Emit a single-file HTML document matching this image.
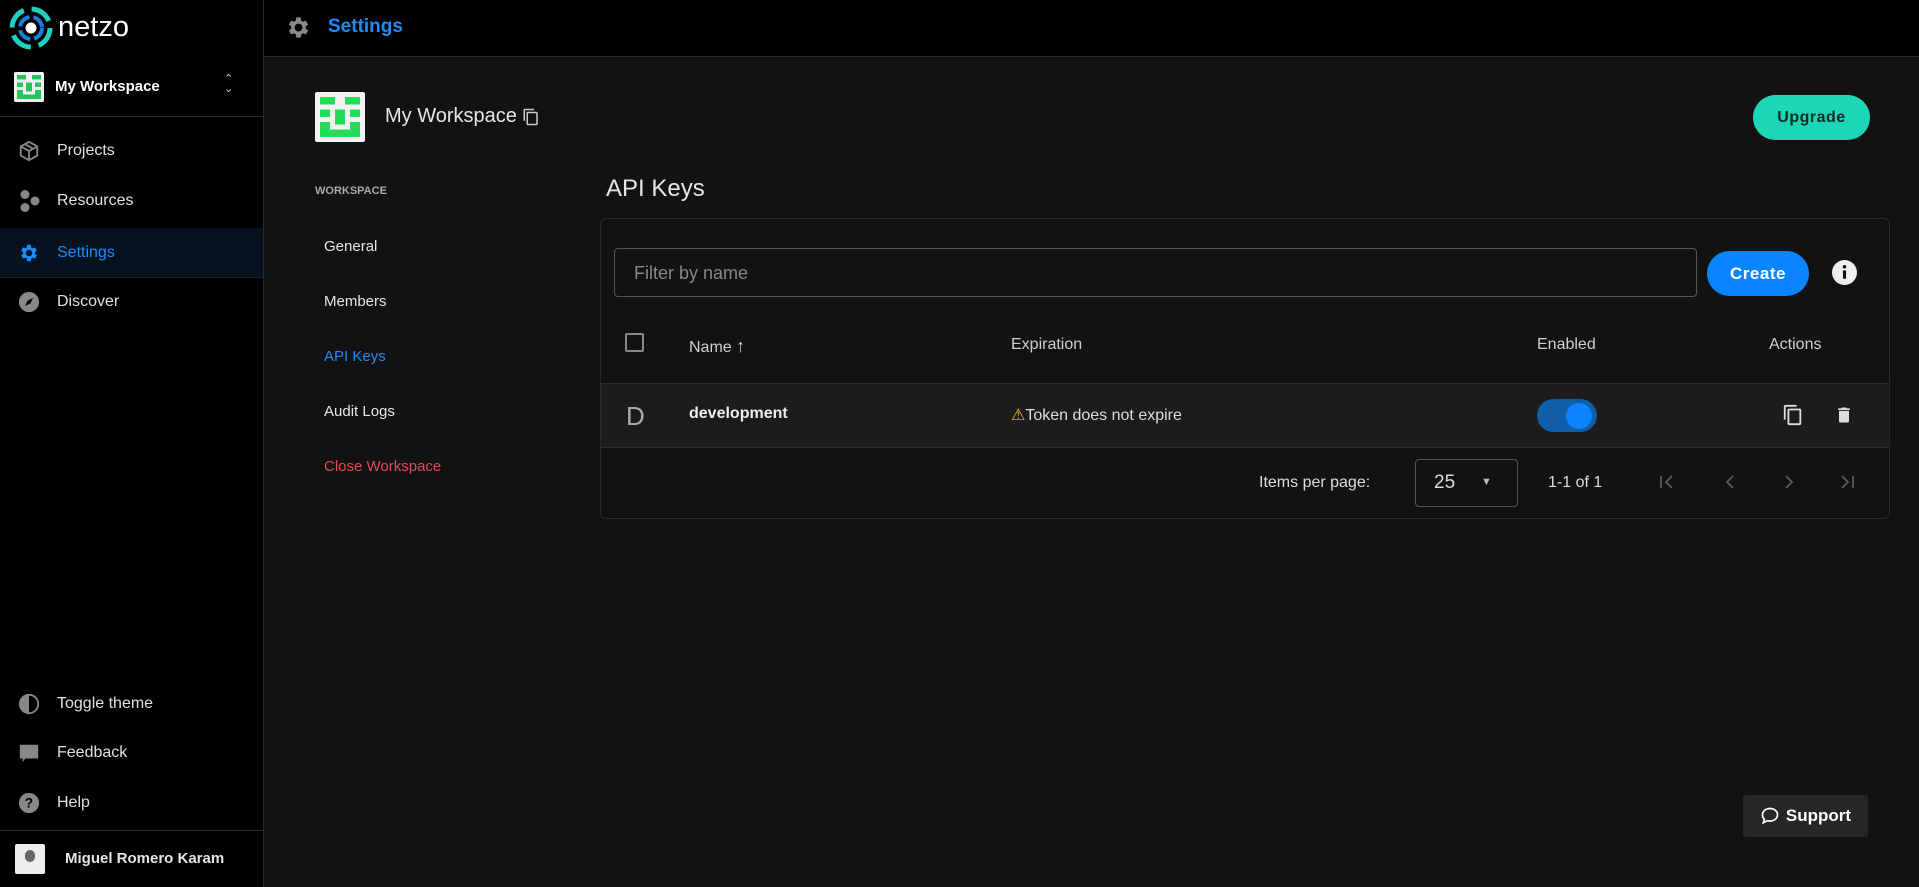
<!DOCTYPE html>
<html><head><meta charset="utf-8"><style>
*{box-sizing:border-box;margin:0;padding:0}
body{width:1919px;height:887px;background:#121212;font-family:"Liberation Sans",sans-serif;color:#e6e6e6;position:relative;overflow:hidden}
.abs{position:absolute}
.side{left:0;top:0;width:264px;height:887px;background:#000;border-right:1px solid #2a2a2a}
.top{left:264px;top:0;right:0;height:57px;background:#000;border-bottom:1px solid #2a2a2a}
.nav{position:absolute;left:0;width:263px;height:50px;display:flex;align-items:center;font-size:16px;color:#e0e0e0}
.nav svg{position:absolute;left:18px}
.nav span{position:absolute;left:57px}
.sub{position:absolute;left:324px;font-size:15px;color:#e6e6e6}
.th{position:absolute;top:336px;font-size:16px;color:#cfcfcf}
</style></head><body>
<div class="abs side"></div>
<div class="abs top"></div>
<svg class="abs" style="left:8px;top:5px" width="46" height="46" viewBox="0 0 46 46">
<circle cx="23" cy="23" r="19" fill="none" stroke="#1fd1c1" stroke-width="5" stroke-dasharray="22 8"/>
<circle cx="23" cy="23" r="11" fill="none" stroke="#1a7fe0" stroke-width="4" stroke-dasharray="14 4"/>
<circle cx="23" cy="23" r="5.5" fill="#fff"/>
</svg>
<div class="abs" style="left:58px;top:11px;font-size:29px;line-height:32px;color:#fff">netzo</div>
<div class="abs" style="left:0;top:57px;width:263px;height:60px;border-bottom:1px solid #2a2a2a"></div>
<svg class="abs" style="left:14px;top:72px" width="30" height="30" viewBox="0 0 10 10"><rect width="10" height="10" rx=".6" fill="#f2f2f2"/><g fill="#22c55e"><rect x="1" y="1" width="3" height="1.5"/><rect x="6" y="1" width="3" height="1.5"/><rect x="1" y="3.5" width="2" height="1.5"/><rect x="4" y="3.5" width="2" height="3"/><rect x="7" y="3.5" width="2" height="1.5"/><rect x="1" y="6" width="2" height="3"/><rect x="3" y="7.5" width="4" height="1.5"/><rect x="7" y="6" width="2" height="3"/></g></svg>
<div class="abs" style="left:55px;top:78px;font-size:15px;font-weight:bold;color:#fff">My Workspace</div>
<div class="abs" style="left:224px;top:74px;font-size:11px;color:#ccc;line-height:10px">&#8963;<br>&#8964;</div>
<div class="nav" style="top:126px"><svg width="22" height="22" viewBox="0 0 24 24" fill="none" stroke="#888" stroke-width="2"><path d="M12 2 21 7v10l-9 5-9-5V7z M3 7l9 5 9-5 M12 12v10 M7.5 4.5l9 5"/></svg><span>Projects</span></div>
<div class="nav" style="top:176px"><svg width="24" height="24" viewBox="0 0 24 24" fill="#888"><circle cx="7" cy="5.5" r="4.5"/><circle cx="17" cy="12" r="4.5"/><circle cx="7" cy="18.5" r="4.5"/></svg><span>Resources</span></div>
<div class="nav" style="top:228px;background:#06121f;height:49px"><svg width="22" height="22" viewBox="0 0 24 24" fill="#1a8cff"><path d="M19.4 13a7.5 7.5 0 0 0 0-2l2.1-1.6-2-3.5-2.5 1a7 7 0 0 0-1.7-1L15 3h-4l-.4 2.9a7 7 0 0 0-1.7 1l-2.5-1-2 3.5L6.6 11a7.5 7.5 0 0 0 0 2l-2.1 1.6 2 3.5 2.5-1a7 7 0 0 0 1.7 1L11 21h4l.4-2.9a7 7 0 0 0 1.7-1l2.5 1 2-3.5zM13 15.5a3.5 3.5 0 1 1 0-7 3.5 3.5 0 0 1 0 7z" transform="translate(-1 0)"/></svg><span style="color:#1a8cff">Settings</span></div>
<div class="abs" style="left:0;top:277px;width:263px;border-top:1px solid #1e1e1e"></div>
<div class="nav" style="top:277px"><svg width="22" height="22" viewBox="0 0 24 24"><circle cx="12" cy="12" r="11" fill="#888"/><path d="M16.5 7.5 13.5 13.5 7.5 16.5 10.5 10.5z" fill="#000"/></svg><span>Discover</span></div>
<div class="nav" style="top:679px"><svg width="22" height="22" viewBox="0 0 24 24"><circle cx="12" cy="12" r="10" fill="none" stroke="#888" stroke-width="2"/><path d="M12 2a10 10 0 0 0 0 20z" fill="#888"/></svg><span>Toggle theme</span></div>
<div class="nav" style="top:728px"><svg width="22" height="22" viewBox="0 0 24 24" fill="#888"><path d="M2 3h20v15H8l-3 4v-4H2z"/></svg><span>Feedback</span></div>
<div class="nav" style="top:778px"><svg width="22" height="22" viewBox="0 0 24 24"><circle cx="12" cy="12" r="11" fill="#888"/><text x="12" y="17" font-size="15" font-weight="bold" text-anchor="middle" fill="#000" font-family="Liberation Sans">?</text></svg><span>Help</span></div>
<div class="abs" style="left:0;top:830px;width:263px;border-top:1px solid #2a2a2a"></div>
<div class="abs" style="left:15px;top:844px;width:30px;height:30px;background:#eee;border-radius:2px"><div style="width:10px;height:12px;background:#666;border-radius:5px;margin:6px auto 0"></div></div>
<div class="abs" style="left:65px;top:850px;font-size:15px;font-weight:bold;color:#e6e6e6">Miguel Romero Karam</div>
<svg class="abs" style="left:285px;top:14px" width="27" height="27" viewBox="0 0 24 24" fill="#8a8a8a"><path d="M19.4 13a7.5 7.5 0 0 0 0-2l2.1-1.6-2-3.5-2.5 1a7 7 0 0 0-1.7-1L15 3h-4l-.4 2.9a7 7 0 0 0-1.7 1l-2.5-1-2 3.5L6.6 11a7.5 7.5 0 0 0 0 2l-2.1 1.6 2 3.5 2.5-1a7 7 0 0 0 1.7 1L11 21h4l.4-2.9a7 7 0 0 0 1.7-1l2.5 1 2-3.5zM13 15.5a3.5 3.5 0 1 1 0-7 3.5 3.5 0 0 1 0 7z" transform="translate(-1 0)"/></svg>
<div class="abs" style="left:328px;top:16px;font-size:19px;font-weight:bold;color:#1a8cff">Settings</div>
<svg class="abs" style="left:315px;top:92px" width="50" height="50" viewBox="0 0 10 10"><rect width="10" height="10" rx=".4" fill="#f2f2f2"/><g fill="#22dd55"><rect x="1" y="1" width="3" height="1.5"/><rect x="6" y="1" width="3" height="1.5"/><rect x="1" y="3.5" width="2" height="1.5"/><rect x="4" y="3.5" width="2" height="3"/><rect x="7" y="3.5" width="2" height="1.5"/><rect x="1" y="6" width="2" height="3"/><rect x="3" y="7.5" width="4" height="1.5"/><rect x="7" y="6" width="2" height="3"/></g></svg>
<div class="abs" style="left:385px;top:105px;font-size:20px;color:#e6e6e6">My Workspace</div>
<svg class="abs" style="left:522px;top:108px" width="18" height="18" viewBox="0 0 24 24" fill="#ccc"><path d="M16 1H4a2 2 0 0 0-2 2v14h2V3h12zm3 4H8a2 2 0 0 0-2 2v14a2 2 0 0 0 2 2h11a2 2 0 0 0 2-2V7a2 2 0 0 0-2-2zm0 16H8V7h11z"/></svg>
<div class="abs" style="left:1753px;top:95px;width:117px;height:45px;border-radius:23px;background:#1dd6b8;color:#0b2a24;font-weight:bold;font-size:16px;display:flex;align-items:center;justify-content:center;letter-spacing:.5px">Upgrade</div>
<div class="abs" style="left:315px;top:185px;font-size:11px;font-weight:bold;color:#aaa">WORKSPACE</div>
<div class="sub" style="top:238px">General</div>
<div class="sub" style="top:293px">Members</div>
<div class="sub" style="top:348px;color:#1a8cff">API Keys</div>
<div class="sub" style="top:403px">Audit Logs</div>
<div class="sub" style="top:458px;color:#e5484d">Close Workspace</div>
<div class="abs" style="left:606px;top:175px;font-size:24px;color:#e6e6e6">API Keys</div>
<div class="abs" style="left:600px;top:218px;width:1290px;height:301px;border:1px solid #2a2a2a;border-radius:6px;background:#121212"></div>
<div class="abs" style="left:614px;top:248px;width:1083px;height:49px;border:1px solid #555;border-radius:4px"></div>
<div class="abs" style="left:634px;top:263px;font-size:18px;color:#888">Filter by name</div>
<div class="abs" style="left:1707px;top:251px;width:102px;height:45px;border-radius:23px;background:#0a84ff;color:#fff;font-size:17px;font-weight:bold;display:flex;align-items:center;justify-content:center;letter-spacing:.5px">Create</div>
<svg class="abs" style="left:1832px;top:260px" width="25" height="25" viewBox="0 0 24 24"><circle cx="12" cy="12" r="12" fill="#eee"/><rect x="10.5" y="10" width="3" height="8" fill="#121212"/><circle cx="12" cy="6.5" r="1.7" fill="#121212"/></svg>
<div class="abs" style="left:625px;top:333px;width:19px;height:19px;border:2px solid #888;border-radius:2px"></div>
<div class="th" style="left:689px">Name <span style="font-size:18px">&#8593;</span></div>
<div class="th" style="left:1011px">Expiration</div>
<div class="th" style="left:1537px">Enabled</div>
<div class="th" style="left:1769px">Actions</div>
<div class="abs" style="left:601px;top:383px;width:1288px;height:65px;background:#1c1c1c;border-top:1px solid #2e2e2e;border-bottom:1px solid #2e2e2e"></div>
<div class="abs" style="left:626px;top:401px;font-size:26px;color:#aaa;font-weight:300">D</div>
<div class="abs" style="left:689px;top:405px;font-size:16px;font-weight:bold;color:#eee">development</div>
<div class="abs" style="left:1011px;top:405px;font-size:16px;color:#ddd"><span style="color:#f5b82e">&#9888;</span>Token does not expire</div>
<div class="abs" style="left:1537px;top:399px;width:60px;height:33px;border-radius:17px;background:#0f5ea8"></div>
<div class="abs" style="left:1566px;top:403px;width:26px;height:26px;border-radius:13px;background:#0a84ff"></div>
<svg class="abs" style="left:1782px;top:403px" width="22" height="24" viewBox="0 0 24 24" fill="#ddd"><path d="M16 1H4a2 2 0 0 0-2 2v14h2V3h12zm3 4H8a2 2 0 0 0-2 2v14a2 2 0 0 0 2 2h11a2 2 0 0 0 2-2V7a2 2 0 0 0-2-2zm0 16H8V7h11z"/></svg>
<svg class="abs" style="left:1834px;top:404px" width="20" height="22" viewBox="0 0 24 24" fill="#ddd"><path d="M6 19a2 2 0 0 0 2 2h8a2 2 0 0 0 2-2V7H6zM19 4h-3.5l-1-1h-5l-1 1H5v2h14z"/></svg>
<div class="abs" style="left:1259px;top:474px;font-size:16px;color:#ddd">Items per page:</div>
<div class="abs" style="left:1415px;top:459px;width:103px;height:48px;border:1px solid #555;border-radius:4px"></div>
<div class="abs" style="left:1434px;top:472px;font-size:19px;color:#ddd">25</div>
<div class="abs" style="left:1481px;top:476px;font-size:11px;color:#bbb">&#9660;</div>
<div class="abs" style="left:1548px;top:474px;font-size:16px;color:#ddd">1-1 of 1</div>
<svg class="abs" style="left:1655px;top:470px" width="210" height="24" viewBox="0 0 210 24" fill="none" stroke="#5a5a5a" stroke-width="1.8"><path d="M6 6v12M17 6l-6 6 6 6"/><path d="M78 6l-6 6 6 6"/><path d="M131 6l6 6-6 6"/><path d="M187 6l6 6-6 6M198 6v12"/></svg>
<div class="abs" style="left:1743px;top:795px;width:125px;height:42px;background:#262626;border-radius:3px;display:flex;align-items:center;justify-content:center;gap:6px;font-size:17px;font-weight:bold;color:#fff">
<svg width="20" height="20" viewBox="0 0 24 24" fill="none" stroke="#fff" stroke-width="2"><path d="M12 3c5 0 9 3.2 9 7.5S17 18 12 18c-1 0-2-.1-2.8-.4L4 20l1.3-4A7.3 7.3 0 0 1 3 10.5C3 6.2 7 3 12 3z"/></svg>Support</div>
</body></html>
